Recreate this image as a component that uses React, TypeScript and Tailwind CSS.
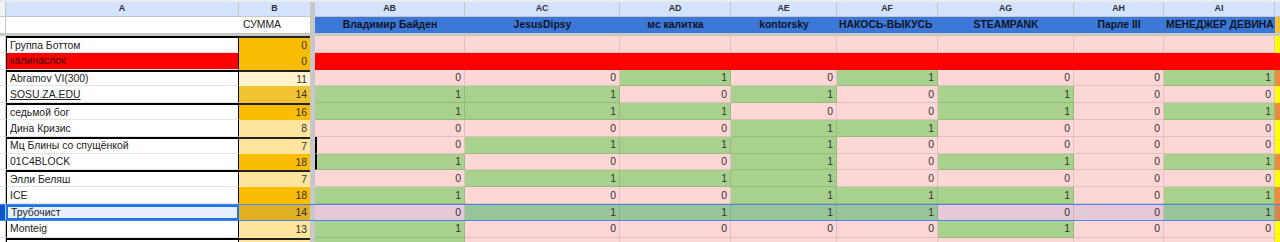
import clsx from "clsx";

type Col = { key: string; name: string; w: string; left?: boolean };

const cols: Col[] = [
  { key: "AB", name: "Владимир Байден", w: "w-[150px]" },
  { key: "AC", name: "JesusDipsy", w: "w-[155px]" },
  { key: "AD", name: "мс калитка", w: "w-[111px]" },
  { key: "AE", name: "kontorsky", w: "w-[106px]" },
  { key: "AF", name: "НАКОСЬ-ВЫКУСЬ", w: "w-[101px]", left: true },
  { key: "AG", name: "STEAMPANK", w: "w-[136px]" },
  { key: "AH", name: "Парле III", w: "w-[90px]" },
  { key: "AI", name: "МЕНЕДЖЕР ДЕВИНА", w: "w-[111px]", left: true },
];

type Row = {
  name: string;
  sum: string;
  sumBg: string;
  vals: number[] | null;
  aj: string;
  red?: boolean;
  group?: boolean;
  link?: boolean;
  selected?: boolean;
  mark?: boolean;
  hidden?: boolean;
};

const rows: Row[] = [
  { name: "Группа Боттом", sum: "0", sumBg: "bg-[#fbbc04]", vals: null, aj: "bg-[#ffff00]", group: true },
  { name: "калинаслок", sum: "0", sumBg: "bg-[#fbbc04]", vals: null, aj: "bg-[#ff0000]", red: true },
  { name: "Abramov VI(300)", sum: "11", sumBg: "bg-[#fff2cc]", vals: [0, 0, 1, 0, 1, 0, 0, 1], aj: "bg-[#ec8b3b]", group: true },
  { name: "SOSU.ZA.EDU", sum: "14", sumBg: "bg-[#f1c232]", vals: [1, 1, 0, 1, 0, 1, 0, 0], aj: "bg-[#ffff00]", link: true },
  { name: "седьмой бог", sum: "16", sumBg: "bg-[#fbbc04]", vals: [1, 1, 1, 0, 0, 1, 0, 1], aj: "bg-[#ec8b3b]", group: true },
  { name: "Дина Кризис", sum: "8", sumBg: "bg-[#fee49c]", vals: [0, 0, 0, 1, 1, 0, 0, 0], aj: "bg-[#ffff00]" },
  { name: "Мц Блины со спущёнкой", sum: "7", sumBg: "bg-[#fee49c]", vals: [0, 1, 1, 1, 0, 0, 0, 0], aj: "bg-[#ffff00]", group: true, mark: true },
  { name: "01C4BLOCK", sum: "18", sumBg: "bg-[#fbbc04]", vals: [1, 0, 0, 1, 0, 1, 0, 1], aj: "bg-[#ec8b3b]", mark: true },
  { name: "Элли Беляш", sum: "7", sumBg: "bg-[#fee49c]", vals: [0, 1, 1, 1, 0, 0, 0, 0], aj: "bg-[#ffff00]", group: true },
  { name: "ICE", sum: "18", sumBg: "bg-[#fbbc04]", vals: [1, 0, 0, 1, 1, 1, 0, 1], aj: "bg-[#ec8b3b]" },
  { name: "Трубочист", sum: "14", sumBg: "bg-[#e0b024]", vals: [0, 1, 1, 1, 1, 0, 0, 1], aj: "bg-[#d9844a]", group: true, selected: true },
  { name: "Monteig", sum: "13", sumBg: "bg-[#fee49c]", vals: [1, 0, 0, 0, 0, 1, 0, 0], aj: "bg-[#ffff00]" },
  { name: "", sum: "", sumBg: "bg-[#fee49c]", vals: [1, 0, 0, 0, 0, 0, 0, 0], aj: "bg-[#ffff00]", group: true, hidden: true },
];

function cellBg(v: number | null, selected?: boolean) {
  if (v === 1) return selected ? "bg-[#98c49a]" : "bg-[#a9d18e]";
  return selected ? "bg-[#e5c9d8]" : "bg-[#fdd6d6]";
}

function SheetRow({ r }: { r: Row }) {
  return (
    <div className={clsx("flex h-[16.8px] shrink-0", r.selected && "border-y border-[#4a86e8]")}>
      <div
        className={clsx(
          "w-[6px] shrink-0 border-r border-[#c4c7c5]",
          r.selected ? "bg-[#0b57d0]" : "bg-white border-b border-b-[#e1e1e1]",
        )}
      />
      <div
        className={clsx(
          "w-[233px] shrink-0 flex items-center pl-[3px] pt-[1px] truncate",
          r.selected
            ? "border-2 border-[#1a73e8] bg-[#e8f0fe] pl-[2px]"
            : "border-x border-black border-b border-b-[#e3e3e3]",
          !r.selected && r.group && "border-t-2 border-t-black",
          r.red ? "bg-[#ff0000] text-[#3a0000]" : !r.selected && "bg-white",
          r.link && "underline",
        )}
      >
        {r.name}
      </div>
      <div
        className={clsx(
          "w-[71px] shrink-0 flex items-center justify-end pr-[3px] pt-[1px] text-[#333]",
          r.sumBg,
          r.group && !r.selected && "border-t-2 border-t-[#222]",
        )}
      >
        {r.sum}
      </div>
      <div className="w-[5px] shrink-0 bg-[#c8c8c8]" />
      {r.red ? (
        <div className="flex-1 bg-[#ff0000]" />
      ) : (
        cols.map((c, i) => {
          const v = r.vals ? r.vals[i] : null;
          return (
            <div
              key={c.key}
              className={clsx(
                c.w,
                "shrink-0 flex items-center justify-end pr-[3px] pt-[1px] text-[#333]",
                !r.selected && "border-b border-black/10",
                "border-r border-r-black/10",
                i === 0 && r.mark && "border-l-2 border-l-black",
                cellBg(v, r.selected),
              )}
            >
              {v === null || r.hidden ? "" : v}
            </div>
          );
        })
      )}
      {!r.red && <div className={clsx("w-[40px] shrink-0", r.aj)} />}
    </div>
  );
}

export default function App() {
  return (
    <div className="w-[1280px] h-[242px] overflow-hidden bg-white font-['Liberation_Sans',Arial,sans-serif] text-[10.4px] text-[#222] flex flex-col">
      {/* column letters */}
      <div className="flex h-[17px] shrink-0 border-t-2 border-[#e9ecef] text-[8.8px] font-bold text-[#2d2f33]">
        <div className="w-[6px] shrink-0 bg-[#f1f3f4] border-r border-b border-[#c4c7c5]" />
        <div className="w-[233px] shrink-0 flex items-center justify-center bg-[#d3e3fd] border-r border-b border-[#c4c7c5]">
          A
        </div>
        <div className="w-[71px] shrink-0 flex items-center justify-center bg-[#d3e3fd] border-b border-[#c4c7c5]">
          B
        </div>
        <div className="w-[5px] shrink-0 bg-[#c8c8c8]" />
        {cols.map((c) => (
          <div
            key={c.key}
            className={clsx(c.w, "shrink-0 flex items-center justify-center bg-[#d3e3fd] border-r border-b border-[#c4c7c5]")}
          >
            {c.key}
          </div>
        ))}
        <div className="w-[40px] shrink-0 bg-[#d3e3fd] border-b border-[#c4c7c5]" />
      </div>

      {/* names row */}
      <div className="flex h-[16px] shrink-0">
        <div className="w-[6px] shrink-0 bg-white border-r border-[#c4c7c5]" />
        <div className="w-[233px] shrink-0 bg-white" />
        <div className="w-[71px] shrink-0 bg-white flex items-center pl-[4px] text-[#222]">СУММА</div>
        <div className="w-[5px] shrink-0 bg-[#c8c8c8]" />
        {cols.map((c) => (
          <div
            key={c.key}
            className={clsx(
              c.w,
              "shrink-0 flex items-center bg-[#3c78d8] font-bold text-[#0d1526] whitespace-nowrap overflow-hidden",
              c.left ? "justify-start pl-[2px]" : "justify-center",
            )}
          >
            {c.name}
          </div>
        ))}
        <div className="w-[40px] shrink-0 bg-[#f1c232]" />
      </div>

      {/* frozen rows divider */}
      <div className="h-[3px] shrink-0 bg-[#c8c8c8]" />

      {rows.map((r, i) => (
        <SheetRow key={i} r={r} />
      ))}
    </div>
  );
}
